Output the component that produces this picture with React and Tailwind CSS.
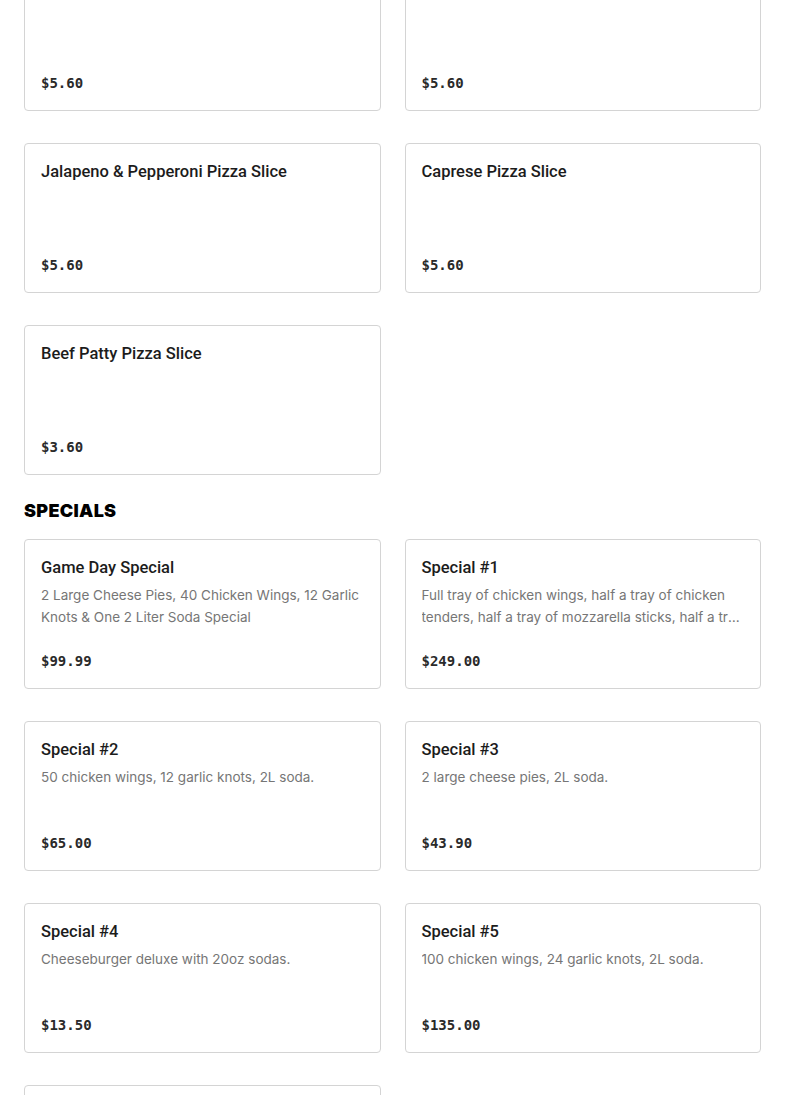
import React from "react";

const SLICES = [
  { name: "Pepperoni Pizza Slice", price: "$5.60" },
  { name: "Grandma Pizza Slice", price: "$5.60" },
  { name: "Jalapeno & Pepperoni Pizza Slice", price: "$5.60" },
  { name: "Caprese Pizza Slice", price: "$5.60" },
  { name: "Beef Patty Pizza Slice", price: "$3.60" },
];

const SPECIALS = [
  {
    name: "Game Day Special",
    desc: "2 Large Cheese Pies, 40 Chicken Wings, 12 Garlic Knots & One 2 Liter Soda Special",
    price: "$99.99",
  },
  {
    name: "Special #1",
    desc: "Full tray of chicken wings, half a tray of chicken tenders, half a tray of mozzarella sticks, half a tray of garlic knots, 2L soda.",
    price: "$249.00",
  },
  { name: "Special #2", desc: "50 chicken wings, 12 garlic knots, 2L soda.", price: "$65.00" },
  { name: "Special #3", desc: "2 large cheese pies, 2L soda.", price: "$43.90" },
  { name: "Special #4", desc: "Cheeseburger deluxe with 20oz sodas.", price: "$13.50" },
  { name: "Special #5", desc: "100 chicken wings, 24 garlic knots, 2L soda.", price: "$135.00" },
  { name: "Special #6", desc: "2 large cheese pies, 24 chicken wings, 2L soda.", price: "$59.90" },
];

function ItemCard({ item }) {
  return (
    <div className="h-[150px] flex flex-col border border-[#d4d4d4] rounded-[4px] bg-white p-4">
      <h3 className="text-[16.5px] leading-6 font-medium text-[#1c1c1c] font-['Roboto',sans-serif]">
        {item.name}
      </h3>
      {item.desc && (
        <p className="mt-1 text-[13.5px] leading-[22px] text-[#767676] line-clamp-2">
          {item.desc}
        </p>
      )}
      <p className="mt-auto text-[14px] leading-[22px] font-bold text-[#2a2a2a] font-['DejaVu_Sans_Mono',monospace]">
        {item.price}
      </p>
    </div>
  );
}

export default function App() {
  return (
    <div className="min-h-screen bg-white font-['Inter',sans-serif] overflow-hidden">
      <div className="px-6 -mt-[39px] pb-10">
        <div className="grid grid-cols-2 gap-x-6 gap-y-8">
          {SLICES.map((item, i) => (
            <ItemCard key={i} item={item} />
          ))}
        </div>

        <h2 className="mt-6 mb-4 text-[18px] leading-6 font-black uppercase text-black tracking-[0.3px]">
          Specials
        </h2>
        <div className="grid grid-cols-2 gap-x-6 gap-y-8">
          {SPECIALS.map((item, i) => (
            <ItemCard key={i} item={item} />
          ))}
        </div>
      </div>
    </div>
  );
}
